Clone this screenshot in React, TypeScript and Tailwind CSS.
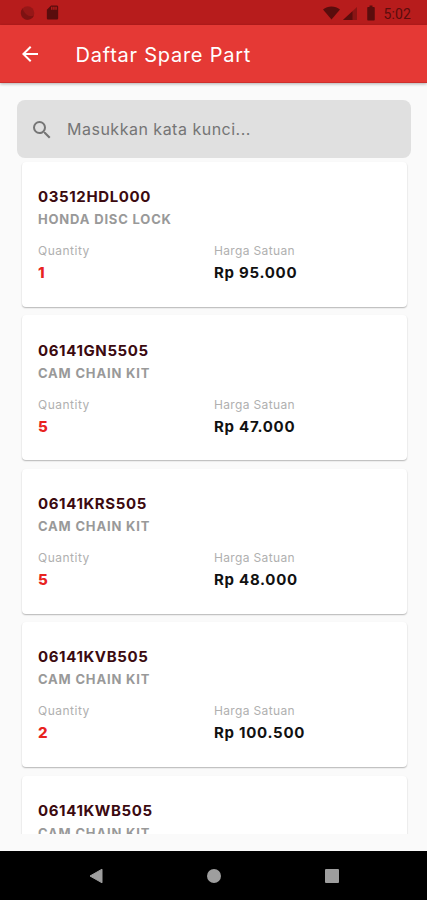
import { MdArrowBack, MdBatteryFull, MdSdCard, MdSearch } from "react-icons/md"

interface SparePart {
  code: string
  name: string
  quantity: number
  price: string
}

const parts: SparePart[] = [
  { code: "03512HDL000", name: "HONDA DISC LOCK", quantity: 1, price: "Rp 95.000" },
  { code: "06141GN5505", name: "CAM CHAIN KIT", quantity: 5, price: "Rp 47.000" },
  { code: "06141KRS505", name: "CAM CHAIN KIT", quantity: 5, price: "Rp 48.000" },
  { code: "06141KVB505", name: "CAM CHAIN KIT", quantity: 2, price: "Rp 100.500" },
  { code: "06141KWB505", name: "CAM CHAIN KIT", quantity: 5, price: "Rp 50.000" },
]

function StatusBar() {
  return (
    <div className="flex h-[25px] shrink-0 items-center bg-[#b71c1c] pl-5 pr-4 text-[#5a0d0d]">
      <svg viewBox="0 0 16 16" className="h-4 w-4">
        <circle cx="7.5" cy="8" r="6.8" fill="#961717" />
        <path d="M2.5 3.5A6.8 6.8 0 1 0 14 10.5C10 13 4 9 2.5 3.5Z" fill="#7d1212" />
      </svg>
      <MdSdCard className="ml-2 h-[17px] w-[17px]" />
      <svg viewBox="0 0 18 14" className="ml-auto h-3.5 w-[17px]" fill="currentColor">
        <path d="M0 3.2C5-1 13-1 18 3.2L9 14Z" />
      </svg>
      <svg viewBox="0 0 14 13" className="ml-[3px] mt-px h-[13px] w-3.5">
        <path d="M14 0V13H0Z" fill="#8a1515" />
        <path d="M9.5 4.2V13H0Z" fill="currentColor" />
      </svg>
      <MdBatteryFull className="ml-[5px] mr-px h-[18px] w-[18px]" />
      <span className="ml-[3px] pt-[2px] font-['Roboto',sans-serif] text-[14px] leading-none tracking-[0.1px]">5:02</span>
    </div>
  )
}

function AppBar() {
  return (
    <header className="z-10 flex h-[58px] shrink-0 items-center border-b border-[#cf2f2c] bg-[#e53935] pl-[18px] text-white shadow-[0_1px_3px_rgba(0,0,0,0.3)]">
      <MdArrowBack className="mt-px h-6 w-6" />
      <h1 className="ml-[33.5px] pt-[3px] text-[20px] leading-6 tracking-[0.75px]">Daftar Spare Part</h1>
    </header>
  )
}

function PartCard({ part }: { part: SparePart }) {
  return (
    <li className="h-[145px] shrink-0 rounded-[4px] bg-white pl-[16.5px] pt-[25.2px] shadow-[0_1px_1.5px_rgba(0,0,0,0.28)]">
      <h2 className="text-[15px] font-bold leading-[20px] tracking-[0.62px] text-[#3b0a10]">{part.code}</h2>
      <p className="mt-0.5 text-[13px] font-bold leading-[20px] tracking-[0.82px] text-[#999999]">{part.name}</p>
      <div className="mt-3.5 flex">
        <div className="w-44">
          <p className="text-[12px] leading-4 tracking-[0.5px] text-[#b0b0b0]">Quantity</p>
          <p className="mt-1 text-[15px] font-extrabold leading-[20px] text-[#e8231f]">{part.quantity}</p>
        </div>
        <div>
          <p className="text-[12px] leading-4 tracking-[0.35px] text-[#b0b0b0]">Harga Satuan</p>
          <p className="mt-1 text-[15px] font-bold leading-[20px] tracking-[0.72px] text-[#111111]">{part.price}</p>
        </div>
      </div>
    </li>
  )
}

function NavigationBar() {
  return (
    <nav className="flex h-[49px] shrink-0 items-center justify-between bg-black pl-[89px] pr-[88px] text-[#9e9e9e]">
      <svg viewBox="0 0 14 16" className="h-4 w-3.5" fill="currentColor">
        <path d="M13 1.2V14.8L1 8Z" stroke="currentColor" strokeLinejoin="round" />
      </svg>
      <div className="h-3.5 w-3.5 rounded-full bg-[#9e9e9e]" />
      <div className="h-3.5 w-3.5 rounded-[1px] bg-[#9e9e9e]" />
    </nav>
  )
}

export default function App() {
  return (
    <div className="flex h-[900px] w-[427px] flex-col overflow-hidden bg-[#fafafa] font-['Inter',sans-serif]">
      <StatusBar />
      <AppBar />
      <main className="flex min-h-0 flex-1 flex-col pb-[17px] pt-[17px]">
        {/* Search */}
        <div className="ml-[17px] mr-4 flex h-[58px] shrink-0 items-center rounded-[8px] bg-[#e0e0e0] pl-[13px] text-[#757575]">
          <MdSearch className="mt-px h-6 w-6" />
          <span className="ml-[13px] text-[16px] tracking-[0.5px]">Masukkan kata kunci...</span>
        </div>

        {/* Parts */}
        <ul className="flex min-h-0 flex-1 flex-col gap-[8.4px] overflow-hidden pl-[21.5px] pr-5 pt-1">
          {parts.map((part) => (
            <PartCard key={part.code} part={part} />
          ))}
        </ul>
      </main>
      <NavigationBar />
    </div>
  )
}
